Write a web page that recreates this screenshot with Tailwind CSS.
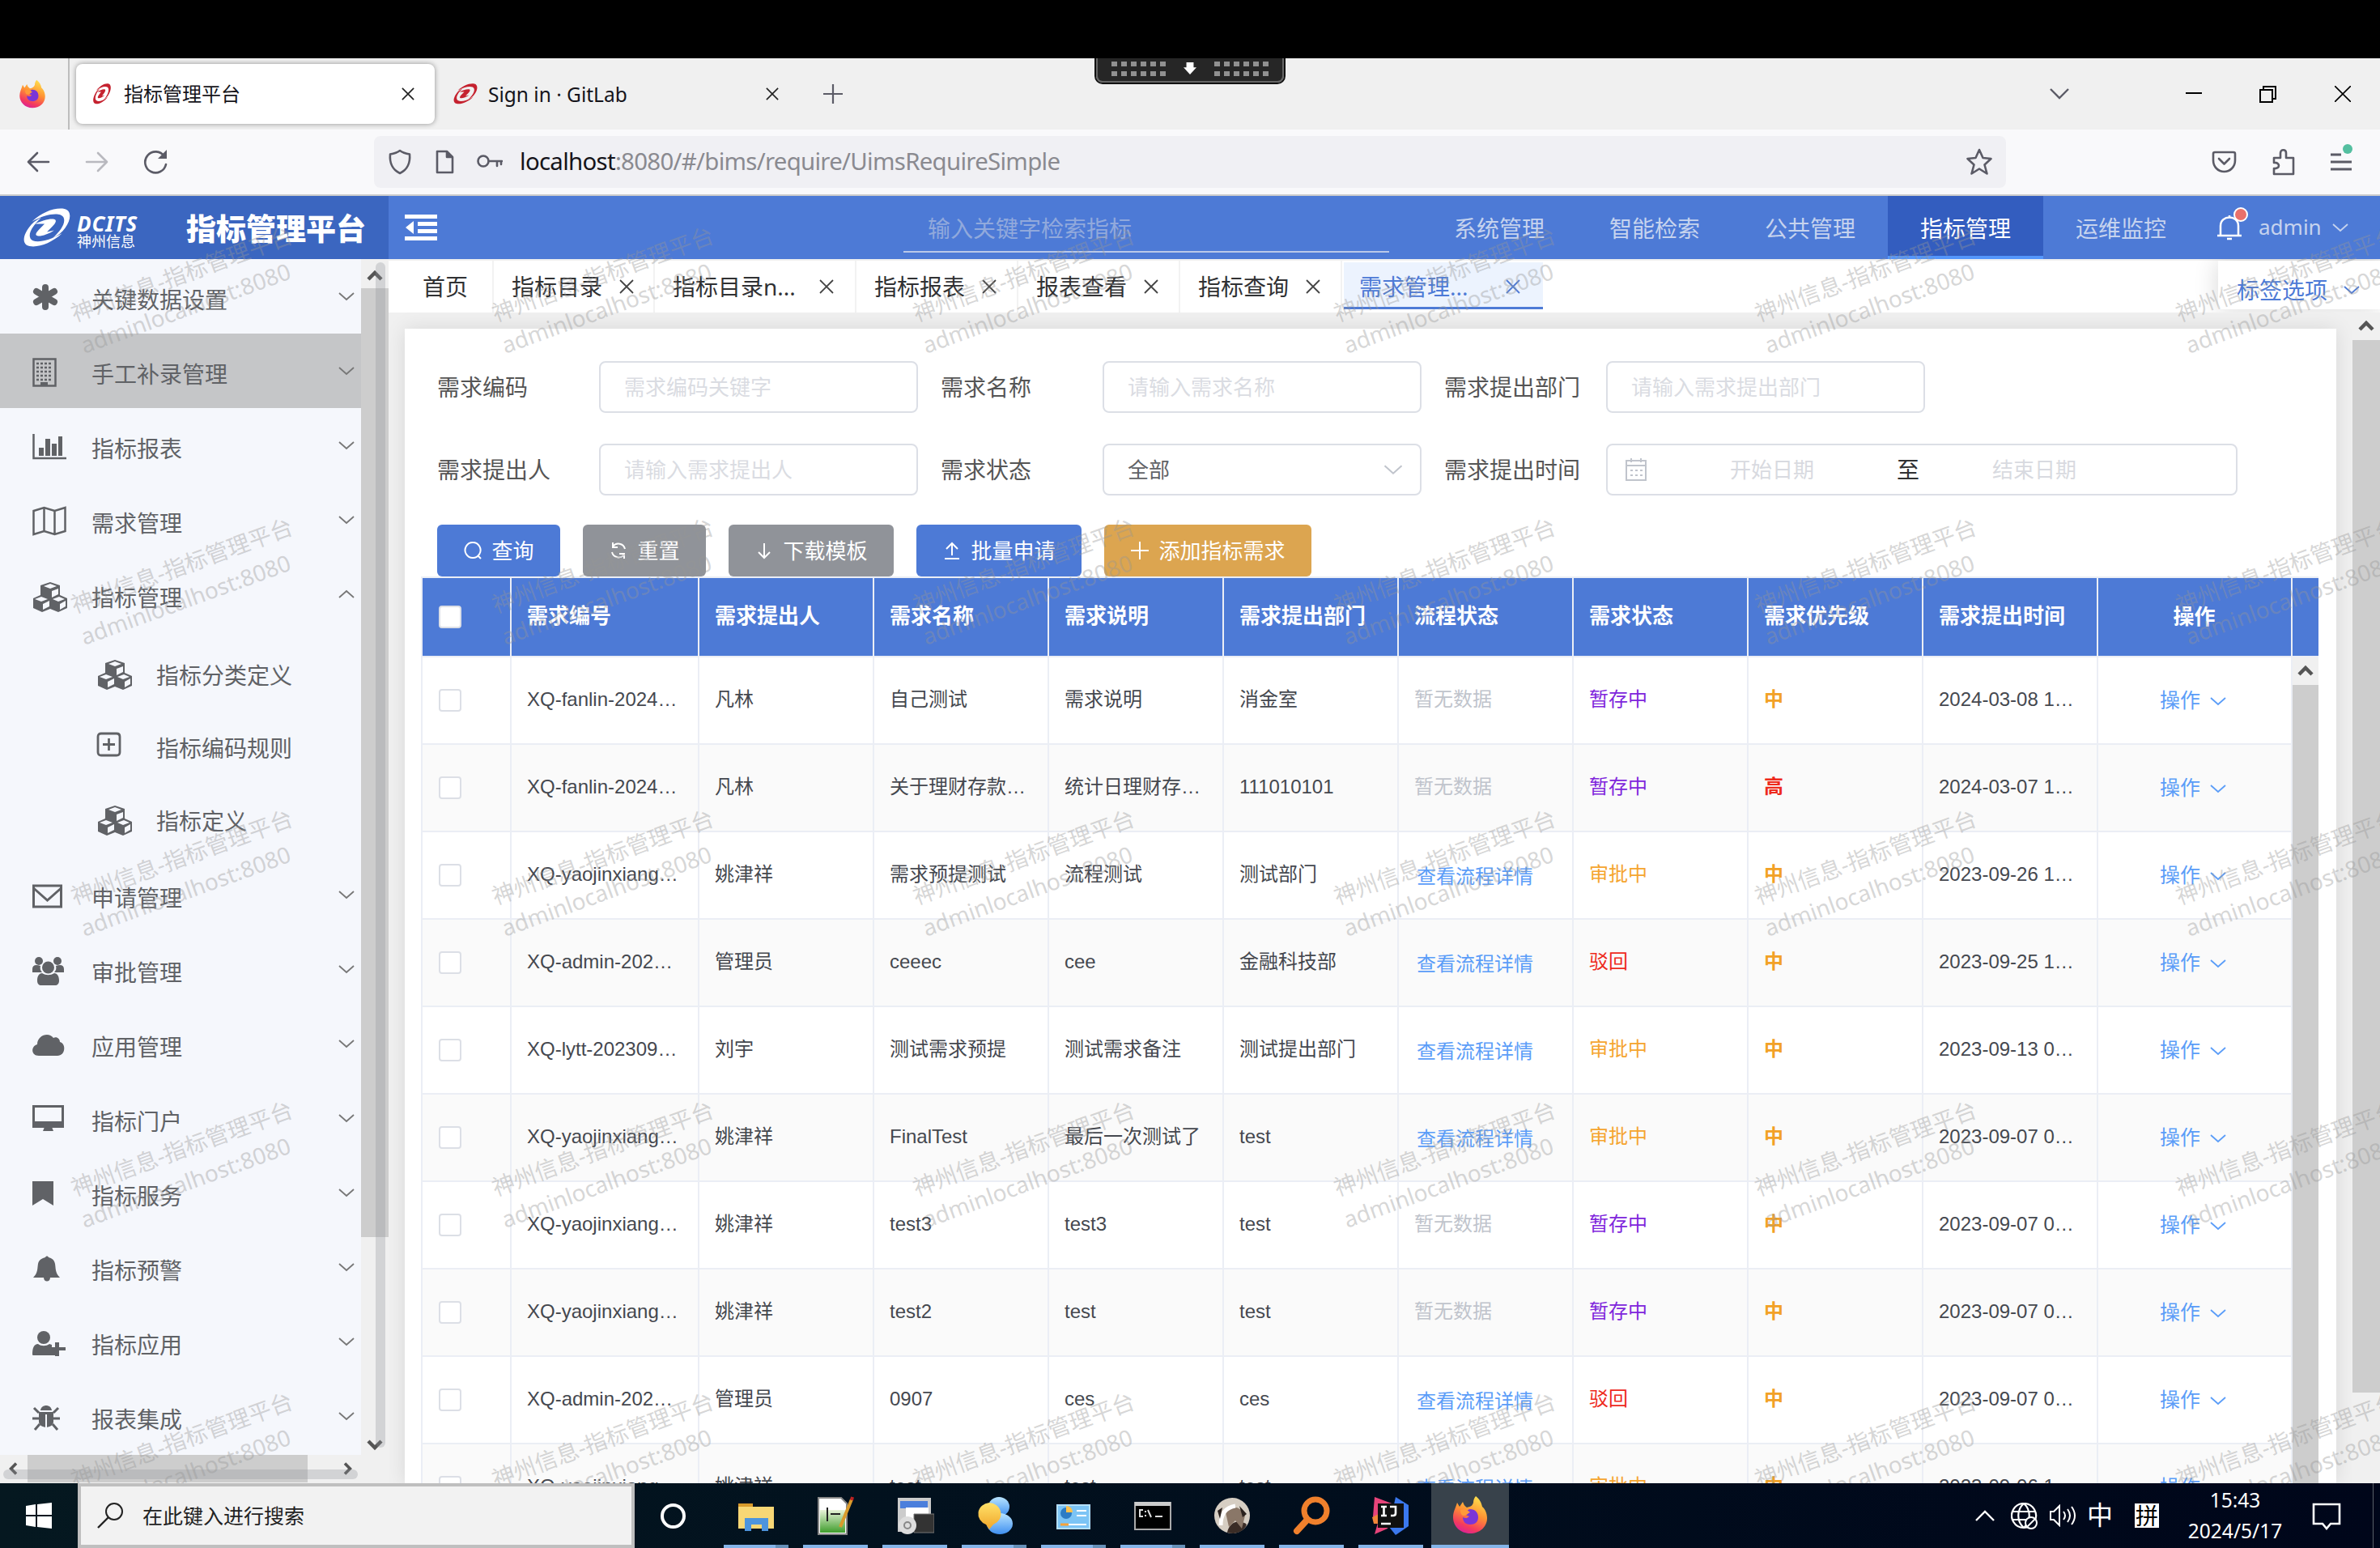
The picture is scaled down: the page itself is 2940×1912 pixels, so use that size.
<!DOCTYPE html>
<html lang="zh-CN">
<head>
<meta charset="utf-8">
<title>指标管理平台</title>
<script src="https://cdn.jsdelivr.net/npm/@tailwindcss/browser@4"></script>
</head>
<body class="bg-black">
<svg width="0" height="0" class="absolute">
  <defs>
    <linearGradient id="fxg" x1="0.7" y1="0" x2="0.3" y2="1"><stop offset="0" stop-color="#ffe14d"/><stop offset=".45" stop-color="#ff9133"/><stop offset=".8" stop-color="#f43a5e"/><stop offset="1" stop-color="#d9209b"/></linearGradient>
    <linearGradient id="green" x1="0" y1="0" x2="0" y2="1"><stop offset="0" stop-color="#e8f3d8"/><stop offset="1" stop-color="#3f9d2c"/></linearGradient>
    <linearGradient id="blue" x1="0" y1="0" x2="0" y2="1"><stop offset="0" stop-color="#b8e4ff"/><stop offset="1" stop-color="#3f8ff0"/></linearGradient>
    <linearGradient id="yel" x1="0" y1="0" x2="0" y2="1"><stop offset="0" stop-color="#ffe26a"/><stop offset="1" stop-color="#f0a52a"/></linearGradient>
    <symbol id="fx" viewBox="0 0 48 48"><path fill="url(#fxg)" d="M31 1c5 4 7 8 8 13 3 2 6 8 6 14 0 11-9 19-21 19S3 38 3 27c0-7 3-11 5-18l3 5 4-6c1 3 2 5 5 7 4-1 7-2 8-6 0-3 1-6 3-8z"/><path fill="#7a35d8" d="M24 17c6 0 10 4 10 10s-4 9-10 9-9-4-9-9c3 2 6 1 8-1-3-1-5-2-4-4 1-3 3-5 5-5z"/><path fill="#ff9a3a" d="M12 18c4-2 9 0 12 3-3 1-4 4-8 4-3 0-4-4-4-7z"/></symbol>
    <symbol id="sw" viewBox="0 0 64 50"><path d="M13 17C26 5 42-1 54 1c9 2 9 13 1 24-4 6-10 10-16 13 10-9 17-19 14-26C50 5 32 6 13 17z"/><path d="M51 32C38 44 22 50 10 48 1 46 1 36 9 25c4-6 9-10 16-13C15 21 8 31 11 38c3 7 21 5 40-6z"/><path d="M17 20c8-4 18-7 24-6 4 1 2 5-2 9l-7 7 9-2c-7 5-17 8-21 7-4-1-1-5 3-9l6-6z"/></symbol>
    <symbol id="swt" viewBox="0 0 64 50" preserveAspectRatio="none"><path d="M13 17C26 5 42-1 54 1c9 2 9 13 1 24-4 6-10 10-16 13 10-9 17-19 14-26C50 5 32 6 13 17z"/><path d="M51 32C38 44 22 50 10 48 1 46 1 36 9 25c4-6 9-10 16-13C15 21 8 31 11 38c3 7 21 5 40-6z"/><path d="M17 20c8-4 18-7 24-6 4 1 2 5-2 9l-7 7 9-2c-7 5-17 8-21 7-4-1-1-5 3-9l6-6z"/></symbol>
    <symbol id="down" viewBox="0 0 20 12"><path fill="none" stroke="currentColor" stroke-width="1.8" d="M1 2l9 8 9-8"/></symbol>
    <symbol id="arr" viewBox="0 0 20 16"><path fill="none" stroke="#555" stroke-width="4.5" d="M2 13l8-8 8 8"/></symbol>
    <symbol id="x" viewBox="0 0 18 18"><path fill="none" stroke="currentColor" stroke-width="1.8" d="M1 1l16 16M17 1L1 17"/></symbol>
    <symbol id="cubes" viewBox="0 0 44 40"><path fill="#606266" d="M22 1l12 4v12l9 4v12l-11 5-10-4-10 4-11-5V21l9-4V5z"/><path fill="#f5f7fc" d="M22 3l8 3-8 3-8-3zM24 12l8-3v7l-8 4zM11 19l8 3-8 3-8-3zM13 28l8-4v7l-8 4zM33 19l7 3-8 3-7-3zM34 28l7-4v7l-7 4z"/></symbol>
  </defs>
</svg>
<div id="app" class="relative flex h-[1912px] w-[2940px] flex-col overflow-hidden bg-black pt-[72px] font-['Noto_Sans','Noto_Sans_CJK_SC',sans-serif]"></div>
<script>
const use = (id, cls) => `<svg class="shrink-0 ${cls}"><use href="#${id}"/></svg>`;
const down = (cls) => use('down', 'h-3 w-5 ' + cls);

const tabstrip = `
<div class="flex h-[88px] shrink-0 items-center bg-[#f0f0f0] text-[24px] text-[#15141a]">
  <div class="flex h-full w-[86px] shrink-0 items-center justify-center border-r-2 border-[#bdbdbd] pr-1">${use('fx','h-9 w-9')}</div>
  <div class="ml-2 flex h-[74px] w-[443px] shrink-0 items-center rounded-lg bg-white pl-5 pr-[25px] shadow-[0_0_6px_rgba(0,0,0,0.4)]">
    ${use('swt','h-[26px] w-6 fill-[#c5222f]')}<span class="ml-[15px] flex-1">指标管理平台</span>${use('x','h-4 w-4 text-[#222]')}
  </div>
  <div class="flex h-[74px] w-[426px] shrink-0 items-center pl-[22px] pr-px">
    ${use('swt','h-[26px] w-8 fill-[#c5222f]')}<span class="ml-3 flex-1 whitespace-nowrap pt-[2px] text-[24.500px]">Sign in · GitLab</span>${use('x','h-4 w-4 text-[#222]')}
  </div>
  <svg class="ml-[54px] h-6 w-6" viewBox="0 0 24 24"><path stroke="#5b5b66" stroke-width="2.2" d="M12 0v24M0 12h24"/></svg>
  <div class="flex-1"></div>
  <svg class="mr-[144px] h-4 w-6" viewBox="0 0 24 14"><path fill="none" stroke="#5b5b66" stroke-width="2.4" d="M1 1l11 11L23 1"/></svg>
  <svg class="mr-[71px] h-5 w-5" viewBox="0 0 20 20"><path stroke="#000" stroke-width="2" d="M0 9h20"/></svg>
  <svg class="mr-[72px] h-[21px] w-[21px]" viewBox="0 0 21 21"><path fill="none" stroke="#000" stroke-width="2" d="M1 5h15v15H1zM5 5V1h15v15h-4"/></svg>
  <svg class="mr-9 h-5 w-5" viewBox="0 0 20 20"><path stroke="#000" stroke-width="1.6" d="M0 0l20 20M20 0L0 20"/></svg>
</div>`;

const ic = 'fill="none" stroke="#5b5b66" stroke-width="2.6" stroke-linejoin="round" stroke-linecap="round"';
const navbar = `
<div class="flex h-[82px] shrink-0 items-center border-b-2 border-[#ccc] bg-[#f9f9fb] pl-8">
  <svg class="h-7 w-[30px]" viewBox="0 0 30 28"><path ${ic} d="M14 3L3 14l11 11M3 14h25"/></svg>
  <svg class="ml-[43px] h-7 w-[30px] opacity-40" viewBox="0 0 30 28"><path ${ic} d="M16 3l11 11-11 11M27 14H2"/></svg>
  <svg class="ml-[41px] h-[32px] w-[32px]" viewBox="0 0 32 32"><path ${ic} d="M27 9A13 13 0 1 0 29 19"/><path fill="#5b5b66" d="M30 1v11H19z"/></svg>
  <div class="ml-[254px] flex h-16 w-[2016px] items-center rounded-lg bg-[#f0f0f4] pl-[17px]">
    <svg class="h-8 w-[30px]" viewBox="0 0 30 32"><path ${ic} d="M15 2c4 3 9 4 12 4.500C28 17 24 26 15 30 6 26 2 17 3 6.500 6 6 11 5 15 2z"/></svg>
    <svg class="ml-7 h-[30px] w-6" viewBox="0 0 24 30"><path ${ic} d="M3 2h12l7 7v19H3zM15 2v7h7"/><path fill="#5b5b66" d="M15 2l7 7h-7z"/></svg>
    <svg class="ml-[28px] h-5 w-8" viewBox="0 0 32 20"><circle cx="8" cy="9" r="6.500" ${ic}/><path ${ic} d="M15 9h16M25 9v6M30 9v4"/></svg>
    <div class="ml-[21px] flex-1 whitespace-nowrap pb-[2px] text-[29.400px] tracking-[-0.7px] text-[#8a8a90]"><span class="text-[#15141a]">localhost</span>:8080/#/bims/require/UimsRequireSimple</div>
    <svg class="mr-4 h-[34px] w-[34px]" viewBox="0 0 34 34"><path ${ic} d="M17 2l4.500 10 10 1-8 7.500 3 11L17 25.500 7.500 31.500l3-11-8-7.500 10-1z"/></svg>
  </div>
  <svg class="ml-[254px] h-7 w-[31px]" viewBox="0 0 31 28"><path ${ic} d="M4 2h23q2 0 2 2v8c0 8-6 14-13.500 14S2 20 2 12V4q0-2 2-2zM9 10l6.500 6.500L22 10"/></svg>
  <svg class="ml-[43px] h-[34px] w-[30px]" viewBox="0 0 30 34"><path ${ic} d="M3 12h8V6c0-5 7-5 7 0v6h9v20H3v-7c8 1 8-8 0-7z"/></svg>
  <div class="relative ml-[43px]"><svg class="h-6 w-[26px]" viewBox="0 0 26 24"><path stroke="#5b5b66" stroke-width="2.800" d="M0 3h13M0 12h26M0 21h26"/></svg><i class="absolute -top-[10px] left-[15px] h-3 w-3 rounded-full bg-[#54bfa0]"></i></div>
</div>`;

const topnav = ['系统管理','智能检索','公共管理','指标管理','运维监控'].map(t => t === '指标管理'
  ? `<div class="flex h-full w-48 items-center justify-center border-b-4 border-[#5496fb] bg-[#335dbf] pt-[5px] text-white">${t}</div>`
  : `<div class="flex h-full w-48 items-center justify-center pt-px">${t}</div>`).join('');
const header = `
<div class="flex h-[78px] shrink-0 items-center bg-[#4d7ad6] text-[28px] text-[#c6d3ee]">
  <div class="flex h-full w-[480px] items-center bg-[#3b66c0] pl-[26px] text-white">
    ${use('sw','h-[50px] w-[64px] fill-white pt-px')}
    <div class="ml-[5px] flex w-[94px] flex-col pt-[13px]"><span class="whitespace-nowrap text-[26px] font-bold italic leading-[22px] tracking-[0.8px]">DCITS</span><span class="text-[18px] leading-[23px]">神州信息</span></div>
    <h1 class="ml-[41px] whitespace-nowrap pt-[3px] text-[37px] font-black leading-none">指标管理平台</h1>
  </div>
  <svg class="ml-5 h-8 w-10" viewBox="0 0 40 32"><path fill="#fff" d="M0 0h40v5H0zM16 9h24v5H16zM16 18h24v5H16zM0 27h40v5H0zM11 8v16L1 16z"/></svg>
  <div class="ml-[576px] h-[52px] w-[600px] self-end"><div class="flex h-[44px] items-center border-b-2 border-[#b9c8e8] pb-[14px] pl-[30px] text-[28px] text-[#91a9dc]">输入关键字检索指标</div></div>
  <div class="ml-10 flex h-full">${topnav}</div>
  <div class="relative ml-[22px]"><svg class="h-8 w-8" viewBox="0 0 32 32"><path fill="none" stroke="#fff" stroke-width="2.500" d="M1 26h30M5 26V14C5 0 27 0 27 14v12M16 1v3M13 30h6"/></svg><i class="absolute -top-[9px] left-[21px] h-[18px] w-[18px] rounded-full border-2 border-white bg-[#e9706b]"></i></div>
  <span class="ml-5 pb-px text-[26px]">admin</span>
  ${down('ml-[13px]')}
</div>`;

const side = {
 ast:'<path fill="none" stroke="#606266" stroke-width="8" stroke-linecap="round" d="M16 5v24M5 10l22 13M27 10L5 23"/>',
 bld:'<path fill="none" stroke="#606266" stroke-width="2.500" d="M1.500 1.500h27v33h-27z"/><path stroke="#606266" stroke-width="2.600" stroke-dasharray="3 2" d="M5 7h20M5 12h20M5 17h20M5 22h20M5 27h20"/><path fill="#606266" d="M10 30h9v5h-9z"/>',
 bar:'<path fill="none" stroke="#606266" stroke-width="2.500" d="M1.500 2v30H42"/><path fill="#606266" d="M8 19h6v10H8zM16 8h6v21h-6zM24 14h6v15h-6zM32 5h5v24h-5z"/>',
 map:'<path fill="none" stroke="#606266" stroke-width="2.500" d="M1.500 5l13-4 13 4 13-4v29l-13 4-13-4-13 4zM14.500 1v29M27.500 5v29"/>',
 mail:'<path fill="none" stroke="#606266" stroke-width="3" d="M1.500 5h34v26h-34zM1.500 8L18.500 23 35.500 8"/>',
 grp:'<g fill="#606266"><circle cx="8" cy="6" r="5"/><circle cx="31" cy="6" r="5"/><path d="M0 20v-4c0-5 4-6 10-4-1 3 0 6 2 8zM39 20v-4c0-5-4-6-10-4 1 3 0 6-2 8z"/><circle cx="19.500" cy="14" r="7.500"/><path d="M6 30c0-6 3-9 6-9 5 3 10 3 15 0 3 0 6 3 6 9 0 4-2 6-5 6H11c-3 0-5-2-5-6z"/></g>',
 cloud:'<path fill="#606266" d="M8 31c-10 0-10-12-2-14C6 6 20 1 26 9c4-2 8 1 8 5 8 2 7 17-3 17z"/>',
 mon:'<path fill="none" stroke="#606266" stroke-width="3" d="M1.500 1.500h36v25h-36z"/><path fill="#606266" d="M1 20h37v7H1zM15 27h9l2 5H13z"/>',
 book:'<path fill="#606266" d="M0 2h26v30l-13-8-13 8z"/>',
 bell:'<path fill="#606266" d="M1 29c6-6 5-11 6-17 1-5 5-7 9-8 1-2 3-2 4 0 4 1 7 3 8 8 1 6 0 11 6 17H22c0 6-8 6-8 0z"/>',
 userp:'<g fill="#606266"><circle cx="14" cy="11" r="8"/><path d="M0 32c0-8 2-13 7-13 4 3 10 3 14 0l3 1v6h4v7H3c-2 0-3 0-3-1z"/><path d="M28 17h5v6h8v4h-8v7h-5v-7h-6v-4h6z"/></g>',
 bug:'<path fill="#606266" d="M10 9c1-8 13-8 14 0zM8 11h18v12c0 9-18 9-18 0z"/><path stroke="#606266" stroke-width="3" fill="none" d="M2 6l6 6M32 6l-6 6M0 19h8M26 19h8M3 33l6-7M31 33l-6-7"/><path stroke="#f5f7fc" stroke-width="2" d="M17 14v16"/>',
 plus:'<path fill="none" stroke="#606266" stroke-width="2.800" d="M5 2h19q4 0 4 4v19q0 4-4 4H5q-4 0-4-4V6q0-4 4-4zM14.500 8v15M7 15.500h15"/>'
};
const sicon = k => k === 'cubes' ? use('cubes','h-10 w-11') : `<svg class="mb-1 h-9 w-11 shrink-0 overflow-visible" viewBox="0 0 44 36">${side[k]}</svg>`;
const top1 = ([k,t,c]) => `<div class="flex h-[92px] shrink-0 items-center pl-10 pr-2 pt-2 ${c||''}">${sicon(k)}<span class="ml-[29px] flex-1">${t}</span>${down(t==='指标管理'?'rotate-180 mb-2 text-[#777]':'mb-2 text-[#777]')}</div>`;
const sub = ([k,t]) => `<div class="flex h-[90px] shrink-0 items-center pl-[120px] pt-2">${sicon(k)}<span class="ml-[29px]">${t}</span></div>`;
const sidebar = `
<aside class="relative flex w-[480px] shrink-0 flex-col bg-[#f0f0f0]">
  <div class="flex h-[1477px] w-full shrink-0">
    <div class="w-[446px] overflow-hidden bg-[#f5f7fc] text-[28px] text-[#606266]">
      ${[['ast','关键数据设置'],['bld','手工补录管理','bg-[#c5c6c8]'],['bar','指标报表'],['map','需求管理'],['cubes','指标管理']].map(top1).join('')}
      <div class="pt-[5px] pb-[4px]">${[['cubes','指标分类定义'],['plus','指标编码规则'],['cubes','指标定义']].map(sub).join('')}</div>
      ${[['mail','申请管理'],['grp','审批管理'],['cloud','应用管理'],['mon','指标门户'],['book','指标服务'],['bell','指标预警'],['userp','指标应用'],['bug','报表集成']].map(top1).join('')}
    </div>
    <div class="relative flex w-[34px] flex-col items-center pt-3 pb-1">
      ${use('arr','h-4 w-5')}
      <div class="mt-[8px] h-[1172px] w-full bg-[#cdcdcd]"></div>
      <div class="flex-1"></div>${use('arr','h-4 w-5 rotate-180')}
      <i class="absolute left-[18px] top-1 h-[1464px] w-3 rounded-full bg-[#909399]/30"></i>
    </div>
  </div>
  <div class="relative flex h-[34px] w-[446px] items-center justify-between pl-2">
    ${use('arr','h-3.5 w-4 -rotate-90')}<div class="mr-auto ml-[10px] h-full w-[346px] bg-[#cdcdcd]"></div>${use('arr','h-3.5 w-4 rotate-90 mr-2')}
    <i class="absolute left-1 top-[18px] h-3 w-[438px] rounded-full bg-[#909399]/30"></i>
  </div>
</aside>`;

const tab = (t, w, g) => `<div class="flex h-full items-center border-r-2 border-[#f2f2f2] pl-[22px] ${w}"><span>${t}</span>${use('x','h-[18px] w-[18px] text-[#444] ' + g)}</div>`;
const tags = `
<div class="flex h-[66px] shrink-0 items-center border-t-2 border-[#f0f0f0] bg-white text-[28px] text-[#303133]">
  <div class="flex h-full w-[130px] items-center border-r-2 border-[#f2f2f2] pl-[42px]">首页</div>
  ${tab('指标目录','w-[199px]','ml-[21px]')}${tab('指标目录n...','w-[249px]','ml-[29px]')}${tab('指标报表','w-[200px]','ml-[21px]')}${tab('报表查看','w-[200px]','ml-[21px]')}${tab('指标查询','w-[200px]','ml-[21px]')}
  <div class="ml-[2px] flex h-[58px] w-[246px] items-center self-start mt-[2px] border-b-3 border-[#4d7ad6] bg-[#ecf3fe] pl-[19px] pt-1 text-[#4d7ad6]"><span class="w-[181px]">需求管理...</span>${use('x','h-[18px] w-[18px]')}</div>
  <div class="flex-1"></div>
  <div class="flex h-[60px] w-[200px] items-center self-start bg-white pl-[23px] pt-3 text-[#4d7ad6] shadow-[0_0_30px_rgba(0,0,0,0.16)]">标签选项${down('ml-5')}</div>
</div>`;

const lab = t => `<span class="w-[200px] text-[#555]">${t}</span>`;
const inp = t => `<div class="mr-7 flex h-16 w-[394px] items-center rounded-lg border-2 border-[#dcdfe6] px-[29px] text-[26px] text-[#dadce2]">${t}</div>`;
const bi = 'fill="none" stroke="#fff" stroke-width="2"';
const btn = (p, t, w) => `<div class="flex h-16 items-center justify-center gap-[11px] rounded-md text-[26px] text-white ${w}"><svg class="h-6 w-6" viewBox="0 0 24 24"><path ${bi} d="${p}"/></svg>${t}</div>`;
const form = `
<div class="flex h-[306px] shrink-0 flex-col pl-10 pt-10 text-[28px]">
  <div class="flex items-center">${lab('需求编码')}${inp('需求编码关键字')}${lab('需求名称')}${inp('请输入需求名称')}${lab('需求提出部门')}${inp('请输入需求提出部门')}</div>
  <div class="mt-[38px] flex items-center">${lab('需求提出人')}${inp('请输入需求提出人')}${lab('需求状态')}
    <div class="mr-7 flex h-16 w-[394px] items-center justify-between rounded-lg border-2 border-[#dcdfe6] pl-[29px] pr-[21px] text-[26px] text-[#606266]">全部${use('down','h-[14px] w-6 text-[#c0c4cc]')}</div>
    ${lab('需求提出时间')}
    <div class="flex h-16 w-[780px] items-center rounded-lg border-2 border-[#dcdfe6] pl-5 text-[26px] text-[#d8dae0]">
      <svg class="h-[30px] w-[30px]" viewBox="0 0 30 30"><path fill="none" stroke="#c0c4cc" stroke-width="2" d="M3 4h24v24H3zM3 10h24M9 1v5M21 1v5M8 16h3M14 16h3M20 16h3M8 22h3M14 22h3M20 22h3"/></svg>
      <span class="ml-[101px] w-[206px]">开始日期</span><span class="w-[118px] text-[28px] text-[#303133]">至</span><span>结束日期</span>
    </div>
  </div>
  <div class="mt-[36px] flex">
    ${btn('M12 2a9.500 9.500 0 1 0 .1 0M18 18l4 4','查询','w-[152px] bg-[#4d7ad6] mr-7')}${btn('M20 10A8.500 8.500 0 0 0 5 7M5 2v6h6M4 14a8.500 8.500 0 0 0 15 3M19 22v-6h-6','重置','w-[152px] bg-[#909399] mr-7')}${btn('M12 3v18M5 14l7 7 7-7','下载模板','w-[204px] bg-[#909399] mr-7')}${btn('M12 3v15M5 10l7-7 7 7M3 22h18','批量申请','w-[204px] bg-[#4d7ad6] mr-7')}${btn('M12 1v22M1 12h22','添加指标需求','w-[256px] bg-[#dca550]')}
  </div>
</div>`;

const P='暂存中', S='审批中', B='驳回', N='暂无数据', L='查看流程详情';
const rows = [
 ['XQ-fanlin-2024…','凡林','自己测试','需求说明','消金室',N,P,'中','2024-03-08 1…'],
 ['XQ-fanlin-2024…','凡林','关于理财存款…','统计日理财存…','111010101',N,P,'高','2024-03-07 1…'],
 ['XQ-yaojinxiang…','姚津祥','需求预提测试','流程测试','测试部门',L,S,'中','2023-09-26 1…'],
 ['XQ-admin-202…','管理员','ceeec','cee','金融科技部',L,B,'中','2023-09-25 1…'],
 ['XQ-lytt-202309…','刘宇','测试需求预提','测试需求备注','测试提出部门',L,S,'中','2023-09-13 0…'],
 ['XQ-yaojinxiang…','姚津祥','FinalTest','最后一次测试了','test',L,S,'中','2023-09-07 0…'],
 ['XQ-yaojinxiang…','姚津祥','test3','test3','test',N,P,'中','2023-09-07 0…'],
 ['XQ-yaojinxiang…','姚津祥','test2','test','test',N,P,'中','2023-09-07 0…'],
 ['XQ-admin-202…','管理员','0907','ces','ces',L,B,'中','2023-09-07 0…'],
 ['XQ-yaojinxiang…','姚津祥','test','test','test',L,S,'中','2023-09-06 1…']];
const color = {[P]:'text-[#8026dc]',[S]:'text-[#f5a52f]',[B]:'text-[#ee2a1c]',[N]:'text-[#c0c4cc]',[L]:'text-[#5b9df8] pt-1','中':'text-[#f2a127] font-bold','高':'text-[#ee2a1c] font-bold'};
const cell = 'flex items-center whitespace-nowrap border-r-2 border-[#ebeef5] ';
const cols = 'grid grid-cols-[110px_232px_repeat(8,216px)_240px] ';
const box = '<i class="h-[28px] w-[28px] rounded border-2 border-[#dcdfe6] bg-white"></i>';
const table = `
<div class="ml-5 flex w-[2344px] flex-1 flex-col overflow-hidden border-l-2 border-[#ebeef5] border-t-2 font-['Liberation_Sans','Noto_Sans_CJK_SC',sans-serif]">
  <div class="flex h-[98px] shrink-0 border-b-2 border-[#ebeef5] bg-[#4d7ad6] text-[26px] font-bold text-white">
    <div class="${cols}">
      <div class="${cell} pl-5">${box}</div>
      ${['需求编号','需求提出人','需求名称','需求说明','需求提出部门','流程状态','需求状态','需求优先级','需求提出时间'].map(t=>`<div class="${cell} pb-[2px] pl-[19px]">${t}</div>`).join('')}
      <div class="flex items-center justify-center border-r-2 border-[#ebeef5] pr-px">操作</div>
    </div>
  </div>
  <div class="flex flex-1">
    <div>
      ${rows.map((r,i)=>`<div class="${cols} h-[108px] border-b-2 border-[#ebeef5] text-[24px] text-[#45484f] ${i%2?'bg-[#fafafa]':'bg-white'}"><div class="${cell} pl-5">${box}</div>${r.map(t=>`<div class="${cell} ${t===L?'pl-[22px]':'pb-[2px] pl-[19px]'} ${color[t]||''}">${t}</div>`).join('')}<div class="flex items-center justify-center border-r-2 border-[#ebeef5] pr-1 pt-[2px] text-[25px] text-[#5b9df8]">操作${down('ml-3')}</div></div>`).join('')}
    </div>
    <div class="flex w-8 flex-col items-center bg-[#f0f0f0] pt-2">${use('arr','h-4 w-5')}<div class="mt-[10px] w-full flex-1 bg-[#cdcdcd]"></div></div>
  </div>
</div>`;

const main = `
<main class="flex w-[2460px] flex-col">
  ${tags}
  <div class="flex h-[1446px] justify-between bg-[#f0f0f0]">
    <div class="ml-5 mt-5 flex w-[2386px] flex-col bg-white shadow-[0_0_24px_rgba(0,0,0,0.1)]">${form}${table}</div>
    <div class="flex w-[34px] flex-col items-center bg-[#f0f0f0] pt-2">${use('arr','h-4 w-5')}<div class="mt-[10px] h-[1300px] w-full bg-[#cdcdcd]"></div></div>
  </div>
</main>`;

let marks = '';
for (const y of [387,747,1107,1467,1827]) for (const x of [84,604,1124,1644,2164,2684])
  marks += `<g transform="translate(${x} ${y-242}) rotate(-20)"><text x="4" y="13">神州信息-指标管理平台</text><text x="2" y="54">adminlocalhost:8080</text></g>`;
const water = `<svg class="pointer-events-none absolute left-0 top-[242px] h-[1590px] w-[2940px] fill-[#969696]/40 text-[28px]">${marks}</svg>`;

const tbi = [
 '<path fill="#d89a2c" d="M2 9h18v8H2z"/><path fill="#f8d775" d="M2 13h44v27H2z"/><path fill="#4d94dd" d="M10 27h29v16h-8v-8H18v8h-8z"/>',
 '<path fill="#fff" stroke="#888" stroke-width="2" d="M3 2h28l7 7v38H3z"/><path fill="url(#green)" d="M5 17h31v28H5z"/><path stroke="#222" stroke-width="2" d="M14 14v17M18 22h12"/><path stroke="#d99a2c" stroke-width="4" d="M44 4L30 38"/><path stroke="#b22" stroke-width="4" d="M45 1l-1 4"/>',
 '<path fill="#ccc" d="M3 2h41v42H3z"/><path fill="#4b7fdc" d="M6 6h34v9H6z"/><path fill="#fff" d="M13 14h28v14H13z"/><path fill="#333" stroke="#777" d="M23 22h25v23H23z"/><circle cx="15" cy="36" r="11" fill="#ddd"/><circle cx="15" cy="36" r="4" fill="none" stroke="#888" stroke-width="2"/>',
 '<ellipse cx="30" cy="13" rx="13" ry="12" fill="url(#blue)"/><ellipse cx="31" cy="34" rx="16" ry="13" fill="url(#blue)"/><path fill="url(#yel)" d="M18 8a15 14 0 0 1 5 27l-5 6-4-6A15 14 0 0 1 18 8z"/>',
 '<path fill="#7cc4f5" stroke="#b5e0fc" stroke-width="2" d="M4 11h40v29H4z"/><circle cx="15" cy="21" r="7" fill="#2c7cc4"/><path fill="#ffc14d" d="M15 12a8 8 0 0 1 8 8h-8z"/><path stroke="#fff" stroke-width="2" d="M28 18h12M28 24h12M8 35h32"/><path stroke="#f7a33a" stroke-width="3" d="M8 35h10"/>',
 '<path fill="#000" stroke="#aaa" stroke-width="2" d="M2 8h44v33H2z"/><path fill="#ccc" d="M2 7h44v5H2z"/><path stroke="#ddd" stroke-width="2" fill="none" d="M12 17H8v8h4M15 18v2M15 23v2M18 17l4 9M27 25h9"/>',
 '<circle cx="24" cy="24" r="22" fill="#d6cec3"/><path fill="#3a2c26" d="M18 45c2-12 14-18 24-10-3 8-12 13-24 10z"/><path fill="#8a7768" d="M16 20c6-9 18-9 24 4l-4 16-8-10-8 8z"/><path fill="none" stroke="#fff" stroke-width="5" d="M10 36c0-14 6-22 18-24"/><path fill="#2a211d" d="M33 12l9 10-5 4zM6 18l6-4-3 14z"/>',
 '<ellipse cx="29" cy="18" rx="14" ry="14" fill="none" stroke="#f0802c" stroke-width="7"/><path stroke="#f0802c" stroke-width="8" stroke-linecap="round" d="M18 30L6 43"/>',
 '<path fill="#e8447a" d="M4 1l24 9-8 30-16 7 4-14-6-8z"/><path fill="#3b78ee" d="M30 1l16 10v26L30 48l-8-10z"/><path fill="#f2863a" d="M1 26l8-4v12H3z"/><path fill="#101010" d="M8 9h32v30H8z"/><path stroke="#fff" stroke-width="2.600" fill="none" d="M12 13h7M15.500 13v11M12 24h7M23 13h7v8q0 3-3 3h-3M12 34h12"/>'
];
const two = [0,3,4,5];
const taskbar = `
<div class="flex h-20 shrink-0 bg-linear-to-r from-[#051820] to-[#00061a] text-white">
  <div class="flex w-24 items-center justify-center"><svg class="h-8 w-8" viewBox="0 0 32 32"><path fill="#fff" d="M0 4l12-2v13H0zM14 2l18-2v15H14zM0 17h12v13L0 28zM14 17h18v15l-18-2z"/></svg></div>
  <div class="flex w-[688px] items-center border-4 border-[#bfbfbf] bg-[#f2f2f2] pl-5 text-[25px] text-[#222]"><svg class="h-8 w-8" viewBox="0 0 32 32"><circle cx="21" cy="11" r="10" fill="none" stroke="#222" stroke-width="2"/><path stroke="#222" stroke-width="2.400" d="M14 18L1 31"/></svg><span class="ml-[24px] pt-[2px]">在此键入进行搜索</span></div>
  <div class="flex w-[102px] items-center pl-8"><i class="h-[31px] w-[31px] rounded-full border-4 border-white"></i></div>
  <div class="flex gap-[2px]">
    ${tbi.map((p,i)=>`<div class="relative flex w-24 items-center justify-center"><svg class="h-12 w-12" viewBox="0 0 48 48">${p}</svg><i class="absolute bottom-0 left-2 h-1 w-20 bg-[#84b4e8] ${two.includes(i)?'border-r-[16px] border-[#6690b8]':''}"></i></div>`).join('')}
    <div class="flex w-24 items-center justify-center border-b-4 border-[#84b4e8] bg-[#38424b] pt-[2px]">${use('fx','h-12 w-12')}</div>
  </div>
  <div class="flex-1"></div>
  <div class="flex items-center pr-[39px]">
    <svg class="h-6 w-7" viewBox="0 0 28 24"><path fill="none" stroke="#fff" stroke-width="2.400" d="M3 18L14 7l11 11"/></svg>
    <svg class="ml-[18px] h-[33px] w-[33px]" viewBox="0 0 33 33"><path fill="none" stroke="#fff" stroke-width="2.200" d="M16 1a15 15 0 1 0 .1 0M16 1c-9 8-9 22 0 30M16 1c9 8 9 22 0 30M2 11h28M2 21h28"/><circle cx="25" cy="25" r="7" fill="#00081a" stroke="#fff" stroke-width="2"/><path stroke="#fff" stroke-width="2" d="M20 30l10-10"/></svg>
    <svg class="ml-[15px] h-7 w-[34px]" viewBox="0 0 34 28"><path fill="none" stroke="#fff" stroke-width="2" d="M1 9h4l7-7v24l-7-7H1zM17 9q4 5 0 10M22 6q6 8 0 16M27 3q8 11 0 22"/></svg>
    <span class="ml-[12px] pb-[2px] text-[32px]">中</span>
    <span class="ml-[27px] flex h-[30px] w-[30px] items-center justify-center bg-white text-[28px] leading-none text-black">拼</span>
    <div class="ml-[26px] flex w-[136px] flex-col items-center text-[24.500px] leading-[38px]"><span>15:43</span><span>2024/5/17</span></div>
    <svg class="ml-[27px] h-9 w-9" viewBox="0 0 36 36"><path fill="none" stroke="#fff" stroke-width="2.600" d="M2 4h32v24H23l-5 6-5-6H2z"/></svg>
  </div>
  <i class="mr-2 w-px bg-[#5a6068]"></i>
</div>`;

const grip = `<i class="h-[6px] w-[7px] bg-[#909090]"></i>`;
const grips = `<div class="grid grid-cols-6 gap-x-[5px] gap-y-[6px]">${grip.repeat(12)}</div>`;
const badge = `<div class="absolute left-[1354px] top-[72px] flex h-[30px] w-[232px] items-center justify-between rounded-b-lg border-2 border-t-0 border-[#666] bg-[#262626] px-[17px] pb-[2px] outline-2 outline-[#111] [clip-path:inset(0_-4px_-4px_-4px)]">${grips}<svg class="h-[16px] w-[18px]" viewBox="0 0 18 18"><path fill="#fff" d="M4 0h10v7h4l-9 10L0 7h4z"/></svg>${grips}</div>`;

document.getElementById('app').innerHTML = tabstrip + navbar + header + `<div class="flex h-[1512px] shrink-0 overflow-hidden">${sidebar}${main}</div>` + water + `<div class="relative">${taskbar}</div>` + badge;
</script>
</body>
</html>
